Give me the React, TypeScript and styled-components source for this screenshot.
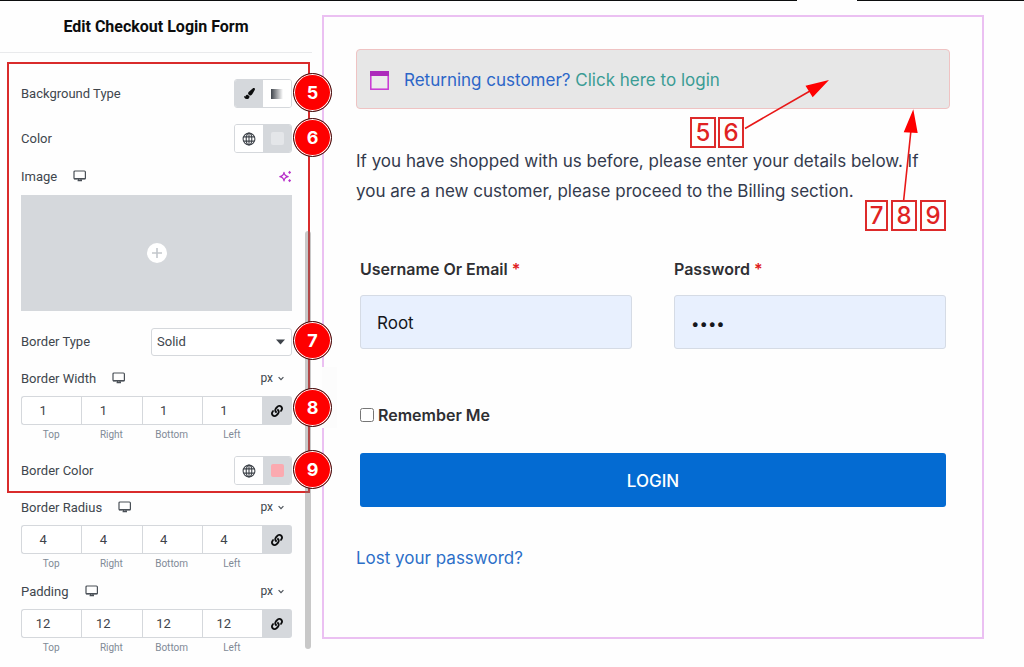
import React from "react";
import styled, { createGlobalStyle } from "styled-components";
import { FaLink, FaPaintBrush } from "react-icons/fa";

const GlobalStyle = createGlobalStyle`
  *, *::before, *::after { box-sizing: border-box; }
  body { margin: 0; background: #fefefe; font-family: Inter, "Liberation Sans", sans-serif; }
  button, input, select { font: inherit; color: inherit; margin: 0; }
  button { padding: 0; border: 0; background: none; }
`;

const Page = styled.div`
  display: flex;
  flex-direction: column;
  min-height: 100vh;
`;

const TopEdge = styled.div`
  display: flex;
  gap: 60px;
  height: 1px;
`;

const EdgeLine = styled.div<{ $grow: number }>`
  flex: ${(p) => p.$grow} 1 0;
  background: #0c0d0e;
`;

const Workspace = styled.div`
  display: flex;
  align-items: flex-start;
`;

/* Editor panel */

const Sidebar = styled.aside`
  position: relative;
  z-index: 1;
  flex: 0 0 312px;
  font-family: Roboto, "Liberation Sans", sans-serif;
  font-size: 13px;
  color: #40464d;
`;

const PanelTitle = styled.h1`
  margin: 0;
  height: 52px;
  line-height: 52px;
  border-bottom: 1px solid #e9eaec;
  text-align: center;
  font-size: 16px;
  font-weight: 700;
  color: #0c0d0e;
`;

const MarkedGroup = styled.section`
  display: flex;
  flex-direction: column;
  margin: 9px 2px 0 7px;
  padding: 15px 16px 6px 12px;
  border: 2px solid #d92b2b;
`;

const PlainGroup = styled.section`
  display: flex;
  flex-direction: column;
  gap: 9px;
  padding: 4px 20px 12px 21px;
`;

const ControlRow = styled.div<{ $top?: number }>`
  position: relative;
  display: flex;
  align-items: center;
  justify-content: space-between;
  height: 29px;
  margin-top: ${(p) => p.$top ?? 0}px;
`;

const LabelRow = styled.div<{ $top?: number }>`
  display: flex;
  align-items: center;
  gap: 16px;
  height: 20px;
  margin-top: ${(p) => p.$top ?? 0}px;
`;

const Push = styled.span`
  margin-left: auto;
  display: flex;
`;

const Segmented = styled.div`
  display: flex;
  width: 58px;
  height: 29px;
  border: 1px solid #d5d8dc;
  border-radius: 3px;
  overflow: hidden;
`;

const Segment = styled.button<{ $active?: boolean }>`
  flex: 1;
  display: flex;
  align-items: center;
  justify-content: center;
  background: ${(p) => (p.$active ? "#d5d8dc" : "#ffffff")};
  color: #0c0d0e;
`;

const Swatch = styled.span<{ $color: string }>`
  width: 13px;
  height: 13px;
  border-radius: 2px;
  background: ${(p) => p.$color};
`;

const GradientChip = styled.span`
  width: 12px;
  height: 10px;
  background: linear-gradient(90deg, #3f444b, #ffffff);
`;

const MediaPicker = styled.button`
  display: flex;
  align-items: center;
  justify-content: center;
  height: 116px;
  margin-top: 9px;
  background: #d5d8dc;
`;

const SelectBox = styled.div`
  position: relative;
  width: 141px;

  select {
    width: 100%;
    height: 28px;
    padding: 0 5px;
    border: 1px solid #d5d8dc;
    border-radius: 3px;
    background: #ffffff;
    appearance: none;
  }

  svg {
    position: absolute;
    right: 7px;
    top: 11px;
    pointer-events: none;
  }
`;

const UnitButton = styled.button`
  display: flex;
  align-items: center;
  gap: 5px;
  margin: 0 8px 0 auto;
  font-size: 12px;
`;

const Dimension = styled.fieldset<{ $top?: number }>`
  display: flex;
  flex-direction: column;
  min-width: 0;
  margin: ${(p) => p.$top ?? 0}px 0 0;
  padding: 0;
  border: 0;
`;

const Cells = styled.div`
  position: relative;
  display: flex;
  margin-top: 8px;
`;

const Cell = styled.label`
  flex: 1;
  min-width: 0;
  display: flex;
  flex-direction: column;
  gap: 2px;
  font-size: 10px;
  line-height: 16px;
  text-align: center;
  color: #818a96;

  input {
    width: 100%;
    height: 29px;
    padding: 0 17px 0 0;
    border: 1px solid #d5d8dc;
    border-right: 0;
    border-radius: 0;
    background: #ffffff;
    text-align: center;
    font-size: 13px;
    color: #3f444b;
    appearance: textfield;
  }

  &:first-child input { border-radius: 3px 0 0 3px; }
`;

const LinkButton = styled.button`
  display: flex;
  align-items: center;
  justify-content: center;
  width: 30px;
  height: 29px;
  border-radius: 0 3px 3px 0;
  background: #d5d8dc;
  color: #0c0d0e;
`;

const StepBadge = styled.span`
  position: absolute;
  right: -40px;
  top: 50%;
  width: 39px;
  height: 39px;
  margin-top: -21px;
  border: 1px solid #3a1010;
  border-radius: 50%;
  background: #fe0000;
  box-shadow: inset 0 0 0 1px #ffffff;
  color: #ffffff;
  font: 700 18px/38px Inter, sans-serif;
  text-align: center;
`;

const CellsBadge = styled(StepBadge)`
  top: 13px;
`;

const Scrollbar = styled.div`
  position: absolute;
  right: 1px;
  top: 230px;
  width: 6px;
  height: 418px;
  border-radius: 3px;
  background: rgba(120, 120, 120, 0.4);
`;

/* Page preview */

const Preview = styled.main`
  position: relative;
  flex: 1;
  min-width: 0;
  padding: 14px 40px 28px 10px;
`;

const WidgetFrame = styled.div`
  position: relative;
  padding: 32px 32px 64px;
  border: 2px solid #ebc0f2;
`;

const PanelToggle = styled.button`
  position: absolute;
  left: 10px;
  top: 366px;
  width: 15px;
  height: 61px;
  background: #fcfcfc;
`;

const Notice = styled.div`
  display: flex;
  align-items: center;
  gap: 15px;
  height: 60px;
  padding: 2px 13px 0;
  border: 1px solid #efc3c3;
  border-radius: 4px;
  background: #e7e7e7;
  font-size: 17px;
  color: #2c66c8;

  a { color: #3a9c95; text-decoration: none; }
`;

const Intro = styled.p`
  margin: 37px 0 0;
  font-size: 17px;
  line-height: 30px;
  color: #333a4d;
`;

const LoginForm = styled.form`
  display: flex;
  flex-direction: column;
  margin: 0 4px;
`;

const Fields = styled.div`
  display: grid;
  grid-template-columns: 1fr 1fr;
  gap: 42px;
  margin-top: 53px;
`;

const Field = styled.label`
  display: flex;
  flex-direction: column;
  gap: 16px;
  font-size: 16px;
  font-weight: 600;
  line-height: 20px;
  color: #2f2f33;

  input {
    width: 100%;
    height: 54px;
    padding: 2px 16px 0;
    border: 1px solid #d5dbe5;
    border-radius: 3px;
    background: #e8f0fe;
    font-size: 17px;
    font-weight: 400;
    color: #15171c;
  }

  input[type="password"] { font-size: 15px; }
`;

const Required = styled.span`
  color: #e02020;
`;

const Remember = styled.label`
  display: flex;
  align-items: center;
  gap: 4px;
  margin-top: 56px;
  font-size: 16px;
  font-weight: 600;
  line-height: 20px;
  color: #2f2f33;

  input { width: 14px; height: 14px; }
`;

const LoginButton = styled.button`
  height: 54px;
  margin-top: 28px;
  padding-top: 2px;
  border-radius: 3px;
  background: #046bd2;
  font-size: 17px;
  font-weight: 500;
  color: #ffffff;
`;

const LostLink = styled.a`
  display: block;
  width: max-content;
  margin-top: 36px;
  font-size: 17px;
  line-height: 30px;
  color: #2c6fc8;
  text-decoration: none;
`;

/* Marks drawn over the preview */

const Marks = styled.div<{ $top: number; $right: number; $gap: number }>`
  position: absolute;
  top: ${(p) => p.$top}px;
  right: ${(p) => p.$right}px;
  display: flex;
  gap: ${(p) => p.$gap}px;
`;

const Mark = styled.span<{ $width?: number }>`
  width: ${(p) => p.$width ?? 26}px;
  height: 31px;
  border: 2px solid #dd2a2a;
  background: #fefefe;
  font-size: 24px;
  font-weight: 500;
  line-height: 28px;
  text-align: center;
  color: #e02222;
`;

const Arrows = styled.svg`
  position: absolute;
  top: 53px;
  right: 32px;
  pointer-events: none;
`;

const DeviceIcon = () => (
  <svg width="14" height="12" viewBox="0 0 14 12" fill="none" stroke="#4a5057" strokeWidth="1.2" aria-hidden="true">
    <rect x="1" y="1" width="11.4" height="8" rx="1" />
    <path d="M1 8.6h11.4M4.6 10.6h4.4M5.6 9v1.4M8 9v1.4" />
  </svg>
);

const GlobeIcon = () => (
  <svg width="14" height="14" viewBox="0 0 14 14" fill="none" stroke="#3f444b" strokeWidth="1.1" aria-hidden="true">
    <circle cx="7" cy="7" r="5.9" />
    <ellipse cx="7" cy="7" rx="2.8" ry="5.9" />
    <path d="M7 1v12M1.7 4.9h10.6M1.7 9.1h10.6" />
  </svg>
);

const SparkleIcon = () => (
  <svg width="13" height="13" viewBox="0 0 13 13" fill="none" stroke="#b72fc9" aria-hidden="true">
    <path d="M5 2.4C5.4 5.2 6.2 6.1 9.2 6.6 6.2 7.1 5.4 8 5 10.8 4.6 8 3.8 7.1 .8 6.6 3.8 6.1 4.6 5.2 5 2.4Z" strokeWidth="1.2" strokeLinejoin="round" />
    <path d="M10.6 .8l1.5 1.6-1.5 1.6-1.5-1.6ZM10.6 9l1.5 1.6-1.5 1.6-1.5-1.6Z" fill="#b72fc9" stroke="none" />
  </svg>
);

const PlusIcon = () => (
  <svg width="20" height="20" viewBox="0 0 20 20" aria-hidden="true">
    <circle cx="10" cy="10" r="10" fill="#ffffff" />
    <path d="M10 5v10M5 10h10" stroke="#c3c7cc" strokeWidth="1.6" />
  </svg>
);

const CaretIcon = () => (
  <svg width="9" height="6" viewBox="0 0 9 6" aria-hidden="true">
    <path d="M0 .5h9L4.5 5.5Z" fill="#3f444b" />
  </svg>
);

const ChevronIcon = () => (
  <svg width="6" height="5" viewBox="0 0 6 5" fill="none" stroke="#4a5057" strokeWidth="1.2" aria-hidden="true">
    <path d="M.6 1.2L3 3.6l2.4-2.4" />
  </svg>
);

const WindowIcon = () => (
  <svg width="19" height="19" viewBox="0 0 19 19" aria-hidden="true">
    <rect x=".8" y=".8" width="17.4" height="17.4" fill="#ececec" stroke="#c936d3" strokeWidth="1.5" />
    <path d="M0 0h19v5H0Z" fill="#ad2bbb" />
  </svg>
);

const ColorControl = ({ label, color, step, top }: { label: string; color: string; step: number; top: number }) => (
  <ControlRow $top={top}>
    <span>{label}</span>
    <Segmented role="group" aria-label={label}>
      <Segment type="button" aria-label="Global color">
        <GlobeIcon />
      </Segment>
      <Segment type="button" aria-label="Pick color" $active>
        <Swatch $color={color} />
      </Segment>
    </Segmented>
    <StepBadge>{step}</StepBadge>
  </ControlRow>
);

const DimensionControl = ({ label, value, step, top }: { label: string; value: number; step?: number; top?: number }) => (
  <Dimension $top={top} aria-label={label}>
    <LabelRow>
      <span>{label}</span>
      <DeviceIcon />
      <UnitButton type="button">
        px
        <ChevronIcon />
      </UnitButton>
    </LabelRow>
    <Cells>
      {["Top", "Right", "Bottom", "Left"].map((side) => (
        <Cell key={side}>
          <input type="text" inputMode="numeric" defaultValue={value} />
          {side}
        </Cell>
      ))}
      <LinkButton type="button" aria-label="Link values">
        <FaLink size={12} />
      </LinkButton>
      {step && <CellsBadge>{step}</CellsBadge>}
    </Cells>
  </Dimension>
);

export default function App() {
  return (
    <Page>
      <GlobalStyle />
      <TopEdge>
        <EdgeLine $grow={797} />
        <EdgeLine $grow={167} />
      </TopEdge>
      <Workspace>
        <Sidebar>
          <PanelTitle>Edit Checkout Login Form</PanelTitle>
          <Scrollbar />
          <MarkedGroup>
            <ControlRow>
              <span>Background Type</span>
              <Segmented role="group" aria-label="Background Type">
                <Segment type="button" aria-label="Classic" $active>
                  <FaPaintBrush size={11} />
                </Segment>
                <Segment type="button" aria-label="Gradient">
                  <GradientChip />
                </Segment>
              </Segmented>
              <StepBadge>5</StepBadge>
            </ControlRow>
            <ColorControl label="Color" color="#e4e6e9" step={6} top={16} />
            <LabelRow $top={13}>
              <span>Image</span>
              <DeviceIcon />
              <Push>
                <SparkleIcon />
              </Push>
            </LabelRow>
            <MediaPicker type="button" aria-label="Choose image">
              <PlusIcon />
            </MediaPicker>
            <ControlRow $top={16}>
              <label htmlFor="border-type">Border Type</label>
              <SelectBox>
                <select id="border-type" defaultValue="Solid">
                  <option>Solid</option>
                </select>
                <CaretIcon />
              </SelectBox>
              <StepBadge>7</StepBadge>
            </ControlRow>
            <DimensionControl label="Border Width" value={1} step={8} top={12} />
            <ColorControl label="Border Color" color="#fbaab0" step={9} top={13} />
          </MarkedGroup>
          <PlainGroup>
            <DimensionControl label="Border Radius" value={4} />
            <DimensionControl label="Padding" value={12} />
          </PlainGroup>
        </Sidebar>
        <Preview>
          <WidgetFrame>
            <Notice>
              <WindowIcon />
              <span>
                Returning customer? <a href="#login">Click here to login</a>
              </span>
            </Notice>
            <Intro>
              If you have shopped with us before, please enter your details below. If you are a new customer, please
              proceed to the Billing section.
            </Intro>
            <LoginForm id="login">
              <Fields>
                <Field>
                  <span>
                    Username Or Email <Required>*</Required>
                  </span>
                  <input type="text" defaultValue="Root" />
                </Field>
                <Field>
                  <span>
                    Password <Required>*</Required>
                  </span>
                  <input type="password" defaultValue="root" />
                </Field>
              </Fields>
              <Remember>
                <input type="checkbox" />
                Remember Me
              </Remember>
              <LoginButton type="button">LOGIN</LoginButton>
            </LoginForm>
            <LostLink href="#lost">Lost your password?</LostLink>
            <Arrows width="210" height="140" viewBox="0 0 210 140" aria-hidden="true">
              <path d="M5 58.5L70 21M163.700 130L171 60" stroke="#e81818" strokeWidth="1.6" />
              <path d="M89 10L65.500 15.700 72.700 27.300ZM173.300 39.300L163.700 62.300 177.700 63Z" fill="#fe0000" />
            </Arrows>
            <Marks $top={100} $right={238} $gap={2}>
              <Mark>5</Mark>
              <Mark>6</Mark>
            </Marks>
            <Marks $top={183} $right={36} $gap={3}>
              <Mark $width={23}>7</Mark>
              <Mark>8</Mark>
              <Mark>9</Mark>
            </Marks>
          </WidgetFrame>
          <PanelToggle type="button" aria-label="Hide panel" />
        </Preview>
      </Workspace>
    </Page>
  );
}
